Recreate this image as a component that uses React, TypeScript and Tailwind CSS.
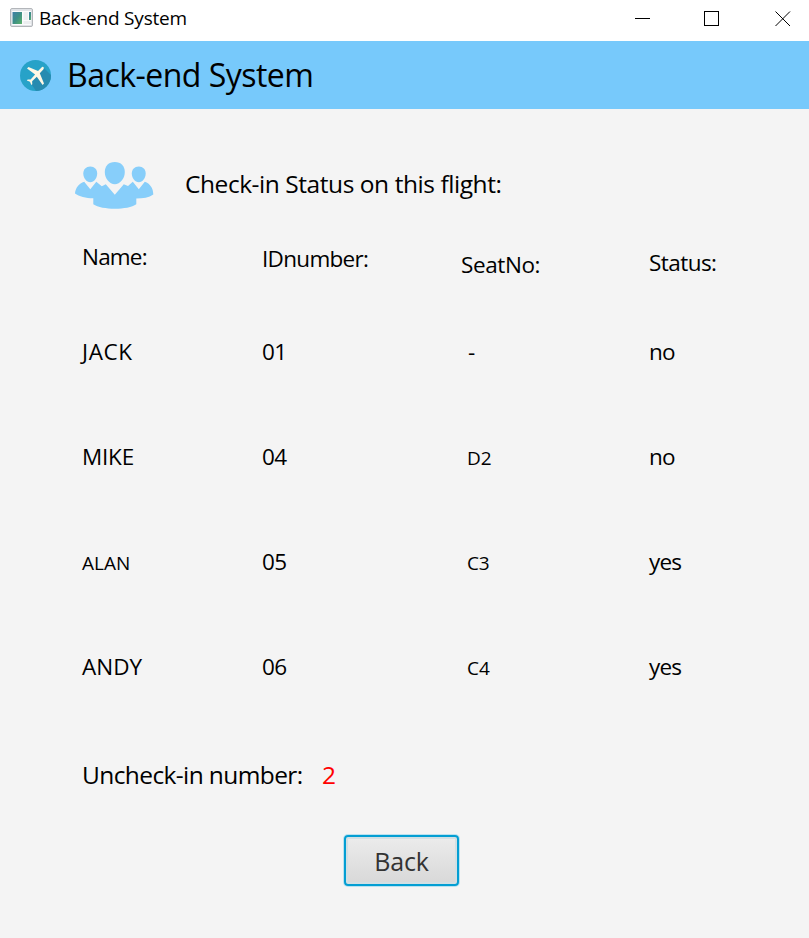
type Passenger = {
  name: string;
  id: string;
  seat: string;
  status: string;
  nameClass: string;
  seatClass: string;
};

const base = "text-[22.5px] leading-[104px]";
const small = "text-[19px] leading-[106px]";

const passengers: Passenger[] = [
  { name: "JACK", id: "01", seat: "-", status: "no", nameClass: `${base} tracking-[0.6px]`, seatClass: `${base} pl-[7px]` },
  { name: "MIKE", id: "04", seat: "D2", status: "no", nameClass: `${base} tracking-[-0.2px]`, seatClass: `${small} pl-1.5` },
  { name: "ALAN", id: "05", seat: "C3", status: "yes", nameClass: small, seatClass: `${small} pl-1.5 tracking-[-0.2px]` },
  { name: "ANDY", id: "06", seat: "C4", status: "yes", nameClass: base, seatClass: `${small} pl-1.5` },
];

function WindowIcon() {
  return (
    <svg width="24" height="20" viewBox="0 0 24 20" className="shrink-0">
      <defs>
        <linearGradient id="pane" x1="0" y1="0" x2="1" y2="1">
          <stop offset="0" stopColor="#3f7fa8" />
          <stop offset="0.5" stopColor="#3d8f86" />
          <stop offset="1" stopColor="#5fb36a" />
        </linearGradient>
      </defs>
      <rect x="0.5" y="0.5" width="22" height="18" rx="1.5" fill="#dfe2e6" stroke="#b3b6ba" />
      <rect x="2" y="3" width="19" height="14" fill="#fbfbfc" />
      <rect x="2.5" y="4" width="9.500" height="12" fill="url(#pane)" />
      <rect x="13.500" y="4" width="4.500" height="8" fill="#eceff1" />
      <rect x="19" y="4" width="2" height="8" fill="url(#pane)" />
      <rect x="13.500" y="13" width="7.500" height="3" fill="#eceef0" />
    </svg>
  );
}

function PlaneIcon() {
  return (
    <svg width="31" height="31" viewBox="0 0 31 31" className="shrink-0">
      <defs>
        <clipPath id="disc">
          <circle cx="15.5" cy="15.5" r="15.5" />
        </clipPath>
      </defs>
      <g clipPath="url(#disc)">
        <rect width="31" height="31" fill="#27a2c8" />
        <path d="M23.500 7.500 L34 18 L31 34 L18 34 L11 23.5 Z" fill="#278bb0" />
      </g>
      <path
        d="M23.3 7c.8.6.7 1.600 0 2.400l-3.500 3.800 4.200 10.200-1.400 1.500-5.800-8.200-4.700 4.500.2 3-1 .9-1.300-3.400-3.200-1.200.9-1 2.900.1 4.500-5L7 8.400l1.500-1.500 9.500 4 3.500-3.500c.6-.6 1.200-.8 1.800-.4z"
        fill="#fff8e4"
      />
    </svg>
  );
}

function PeopleIcon() {
  return (
    <svg width="80" height="48" viewBox="0 0 80 48" fill="#87cefa" className="shrink-0">
      <path d="M39.800 0C46 0 49.800 4 49.800 10C49.800 16.500 45 22.300 39.800 22.300C34.500 22.300 29.800 16.500 29.800 10C29.800 4 33.500 0 39.800 0Z" />
      <path d="M15.300 4.500C19.500 4.500 22.200 7.500 22.200 11.500C22.200 16 19 20.300 15.300 20.300C11.500 20.300 8.300 16 8.300 11.500C8.300 7.500 11 4.500 15.300 4.500Z" />
      <path d="M63.800 4.500C68 4.500 70.700 7.500 70.700 11.500C70.700 16 67.500 20.300 63.800 20.300C60 20.300 56.800 16 56.800 11.500C56.800 7.500 59.500 4.500 63.800 4.500Z" />
      <path d="M18.300 36.300C11 36.300 4 34.500 0 31.500C0.300 26 4 21.500 9.200 19.700L15.300 27.200L21.300 19.700L26.800 24.200L30.800 22.300L39.800 32.700L48.800 22.300L53 24L57.800 19.700L63.800 27.200L69.800 19.700C75 21.500 78.300 26 78.300 32.500C74 35.500 68 36.500 61.300 36.500V42.300C53 48.300 27 48.300 18.300 42.300Z" />
    </svg>
  );
}

export default function App() {
  return (
    <div className="flex h-[938px] w-[809px] flex-col overflow-hidden bg-[#f4f4f4] font-['Open_Sans','Noto_Sans',sans-serif] whitespace-nowrap text-black">
      <div className="flex h-[41px] shrink-0 justify-between bg-white">
        <div className="flex pt-2 pl-2.5">
          <WindowIcon />
          <span className="ml-[5px] text-[19px] leading-5 tracking-[-0.2px]">Back-end System</span>
        </div>
        <svg width="174" height="41" viewBox="0 0 174 41" fill="none" stroke="#000" className="shrink-0">
          <path d="M0 18.500H15" />
          <rect x="69.500" y="11.500" width="14" height="14" />
          <path d="M140.500 11.500L155 26M155 11.500L140.500 26" />
        </svg>
      </div>

      <header className="flex h-[68px] shrink-0 items-center bg-[#77c9fb] pl-5">
        <PlaneIcon />
        <h1 className="ml-[16px] text-[32px] leading-[68px] tracking-[-0.52px]">Back-end System</h1>
      </header>

      <main className="flex flex-col">
        <section className="flex h-[116px] pt-[53px] pl-[75px]">
          <PeopleIcon />
          <h2 className="ml-[30px] text-[24.5px] leading-[44px] tracking-[-0.44px]">Check-in Status on this flight:</h2>
        </section>

        <section className="grid grid-cols-[180px_199px_188px_160px] pl-[82px] text-[22.5px] leading-[30px]">
          <div className="h-[75px] pt-[17px] tracking-[-0.8px]">Name:</div>
          <div className="h-[75px] pt-[19px] tracking-[-0.7px]">IDnumber:</div>
          <div className="h-[75px] pt-[25px] tracking-[-0.4px]">SeatNo:</div>
          <div className="h-[75px] pt-[23px] tracking-[-0.55px]">Status:</div>
          {passengers.map((p) => (
            <div key={p.id} className="contents">
              <div className={`h-[105px] ${p.nameClass}`}>{p.name}</div>
              <div className={`h-[105px] tracking-[-0.6px] ${base}`}>{p.id}</div>
              <div className={`h-[105px] ${p.seatClass}`}>{p.seat}</div>
              <div className={`h-[105px] tracking-[-0.8px] ${base}`}>{p.status}</div>
            </div>
          ))}
        </section>

        <section className="flex h-[72px] pt-[39px] pl-[82px] text-[24.5px] leading-[32px]">
          <span className="w-[240px] tracking-[-0.6px]">Uncheck-in number:</span>
          <span className="text-[#ff0000]">2</span>
        </section>

        <button className="mt-[43px] ml-[344px] flex h-[51px] w-[115px] items-center justify-center rounded-[4px] border-2 border-[#039ed3] bg-gradient-to-b from-[#ececec] to-[#d8d8d8] pt-0.5 text-[25px] tracking-[-0.2px] text-[#333333] shadow-[0_0_0_1px_#b9e2f0,inset_0_0_0_2px_#d2dfe3]">
          Back
        </button>
      </main>
    </div>
  );
}
